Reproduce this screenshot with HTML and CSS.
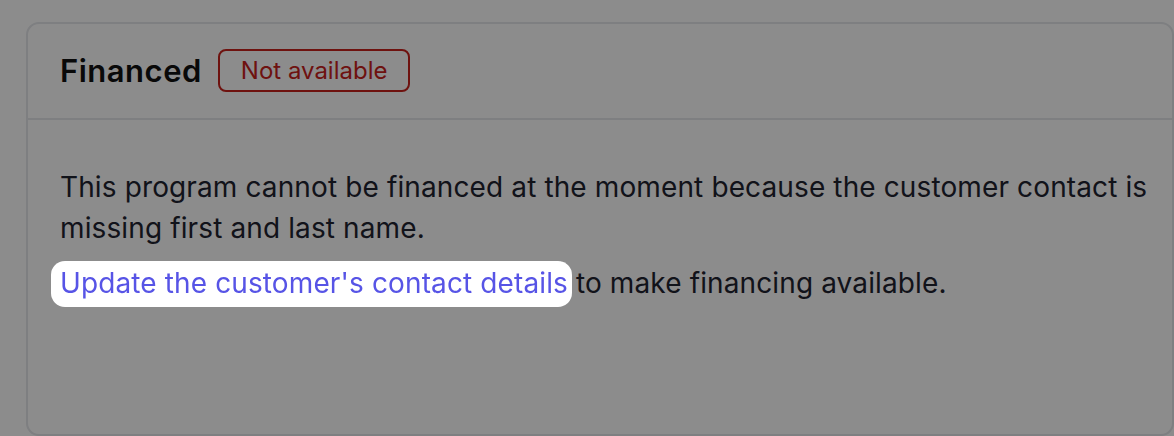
FILE: index.html
```html
<!DOCTYPE html>
<html lang="en">
<head>
<meta charset="utf-8">
<title>Financed</title>
<link rel="stylesheet" href="styles.css">
</head>
<body>
  <main class="page">
    <section class="card">
      <header class="card-header">
        <h2 class="card-title">Financed</h2>
        <span class="badge">Not available</span>
      </header>
      <div class="card-body">
        <p class="msg">This program cannot be financed at the moment because the customer contact is missing first and last name.</p>
        <p class="msg"><a class="spot-link" href="#">Update the customer's contact details</a> to make financing available.</p>
      </div>
    </section>
  </main>
  <div class="overlay"></div>
</body>
</html>
```
FILE: styles.css
```css
* { box-sizing: border-box; }
html, body { margin: 0; padding: 0; }
body {
  background: #ffffff;
  font-family: Inter, "Noto Sans", "Liberation Sans", sans-serif;
  color: #1f2330;
  width: 1174px;
  height: 436px;
  overflow: hidden;
}
.page {
  padding: 22px 0 0 26px;
}
.card {
  background: #ffffff;
  border: 2px solid #e5e7eb;
  border-radius: 13px;
  height: 414px;
  display: flex;
  flex-direction: column;
}
.card-header {
  display: flex;
  align-items: center;
  gap: 16px;
  padding: 25px 32px 26px 32px;
  border-bottom: 2px solid #e5e7eb;
}
.card-title {
  margin: 0;
  font-size: 31px;
  font-weight: 600;
  letter-spacing: 0.5px;
  line-height: 38px;
  color: #111111;
}
.badge {
  display: inline-flex;
  align-items: center;
  height: 43px;
  padding: 0 21px;
  border: 2px solid #c9221c;
  border-radius: 8px;
  color: #c9221c;
  font-size: 24px;
  line-height: 1;
}
.card-body {
  padding: 47px 20px 0 32px;
  flex: 1;
}
.msg {
  margin: 0 0 14px 0;
  font-size: 28px;
  letter-spacing: 0.12px;
  line-height: 41px;
}
.spot-link {
  position: relative;
  z-index: 1001;
  color: #5754e6;
  text-decoration: none;
}
.spot-link::before {
  content: "";
  position: absolute;
  inset: -5px -4px -7px -9px;
  background: #ffffff;
  border-radius: 14px;
  z-index: -1;
}
.overlay {
  position: fixed;
  inset: 0;
  background: rgba(0, 0, 0, 0.45);
  z-index: 1000;
}
```
